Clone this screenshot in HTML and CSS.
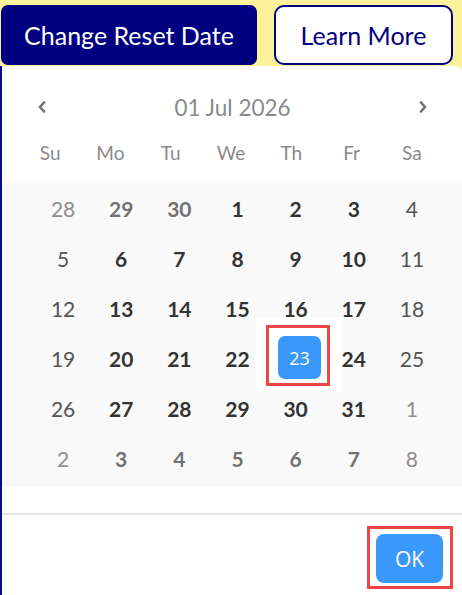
FILE: index.html
```html
<!DOCTYPE html>
<html lang="en">
<head>
    <meta charset="UTF-8">
    <meta name="viewport" content="width=device-width, initial-scale=1.0">
    <title>Reset Date</title>
    <link rel="stylesheet" href="styles.css">
</head>
<body>

<!-- Top actions -->
<div class="actions">
    <button class="btn btn-primary">Change Reset Date</button>
    <button class="btn btn-outline">Learn More</button>
</div>

<!-- Date picker panel -->
<div class="picker">
    <div class="picker-head">
        <button class="nav-btn prev" aria-label="Previous month">
            <svg width="8" height="12" viewBox="0 0 8 12"><polyline points="6,1.5 2,6 6,10.5" /></svg>
        </button>
        <span class="month-label">01 Jul 2026</span>
        <button class="nav-btn next" aria-label="Next month">
            <svg width="8" height="12" viewBox="0 0 8 12"><polyline points="2,1.5 6,6 2,10.5" /></svg>
        </button>
    </div>

    <div class="weekdays">
        <span>Su</span><span>Mo</span><span>Tu</span><span>We</span><span>Th</span><span>Fr</span><span>Sa</span>
    </div>

    <div class="days">
        <span class="day muted weekend">28</span>
        <span class="day muted">29</span>
        <span class="day muted">30</span>
        <span class="day">1</span>
        <span class="day">2</span>
        <span class="day">3</span>
        <span class="day weekend">4</span>

        <span class="day weekend">5</span>
        <span class="day">6</span>
        <span class="day">7</span>
        <span class="day">8</span>
        <span class="day">9</span>
        <span class="day">10</span>
        <span class="day weekend">11</span>

        <span class="day weekend">12</span>
        <span class="day">13</span>
        <span class="day">14</span>
        <span class="day">15</span>
        <span class="day">16</span>
        <span class="day">17</span>
        <span class="day weekend">18</span>

        <span class="day weekend">19</span>
        <span class="day">20</span>
        <span class="day">21</span>
        <span class="day">22</span>
        <span class="day selected"><span class="selected-mark">23</span></span>
        <span class="day">24</span>
        <span class="day weekend">25</span>

        <span class="day weekend">26</span>
        <span class="day">27</span>
        <span class="day">28</span>
        <span class="day">29</span>
        <span class="day">30</span>
        <span class="day">31</span>
        <span class="day muted weekend">1</span>

        <span class="day muted weekend">2</span>
        <span class="day muted">3</span>
        <span class="day muted">4</span>
        <span class="day muted">5</span>
        <span class="day muted">6</span>
        <span class="day muted">7</span>
        <span class="day muted weekend">8</span>
    </div>

    <div class="picker-foot">
        <button class="ok-btn">OK</button>
    </div>
</div>

</body>
</html>
```

FILE: styles.css
```css
body {
    margin: 0;
    font-family: Lato, "Open Sans", sans-serif;
    background-color: #fcf29c;
}

button {
    font-family: inherit;
    cursor: pointer;
}

/* Top buttons */
.actions {
    display: flex;
    gap: 17px;
    padding: 5px 0 1px 1px;
}

.btn {
    height: 60px;
    font-size: 25px;
    border-radius: 7px;
    padding: 0;
}

.btn-primary {
    width: 256px;
    background-color: #000080;
    color: white;
    border: none;
}

.btn-outline {
    width: 179px;
    background-color: white;
    color: #000080;
    border: 2px solid #000080;
    border-radius: 10px;
}

/* Picker panel */
.picker {
    background-color: white;
    border-left: 2px solid #0b0b8c;
    border-top-right-radius: 6px;
    min-height: calc(100vh - 66px);
    box-sizing: border-box;
}

.picker-head {
    display: grid;
    grid-template-columns: 1fr auto 1fr;
    align-items: center;
    height: 40px;
    padding: 21px 35px 0 36px;
}

.nav-btn {
    background: none;
    border: none;
    padding: 0;
    display: flex;
}

.nav-btn.next {
    justify-self: end;
}

.nav-btn polyline {
    fill: none;
    stroke: #6f6f6f;
    stroke-width: 2.6;
    stroke-linecap: round;
    stroke-linejoin: round;
}

.month-label {
    font-size: 22.5px;
    color: #8a8a8a;
}

.weekdays {
    display: grid;
    grid-template-columns: repeat(7, 1fr);
    height: 50px;
    padding: 0 20px 0 18px;
    align-items: center;
    text-align: center;
    font-size: 19px;
    color: #8a8a8a;
}

/* Day grid */
.days {
    position: relative;
    z-index: 0;
    display: grid;
    grid-template-columns: repeat(7, 1fr);
    grid-auto-rows: 50px;
    margin-top: 6px;
    padding: 0 21px 4px 32px;
    background-color: #f9f9f9;
}

.day {
    display: flex;
    align-items: center;
    justify-content: center;
    font-size: 21px;
    font-weight: bold;
    color: #333;
}

.day.weekend {
    font-weight: normal;
    color: #555;
}

.day.muted {
    color: #727272;
}

.day.muted.weekend {
    color: #8e8e8e;
}

.day.selected {
    position: relative;
}

.day.selected::before {
    content: "";
    position: absolute;
    top: -16px;
    bottom: -9px;
    left: -11px;
    right: -18px;
    background-color: white;
    z-index: -1;
}

.day.selected::after {
    content: "";
    position: absolute;
    top: -8px;
    bottom: -3px;
    left: -1px;
    right: -5px;
    border: 3px solid #f04545;
}

.selected-mark {
    width: 43px;
    height: 43px;
    margin-left: 8px;
    margin-top: -1px;
    border-radius: 7px;
    background-color: #3a98fb;
    color: white;
    font-family: "Open Sans", sans-serif;
    font-weight: normal;
    font-size: 18px;
    display: flex;
    align-items: center;
    justify-content: center;
}

/* Footer */
.picker-foot {
    display: flex;
    justify-content: flex-end;
    margin-top: 26px;
    border-top: 2px solid #e6e6e6;
    padding: 19px 19px 12px 0;
}

.ok-btn {
    position: relative;
    width: 67px;
    height: 49px;
    border: none;
    border-radius: 8px;
    background-color: #3a98fb;
    color: white;
    font-family: "Open Sans", sans-serif;
    font-size: 21px;
}

.ok-btn::after {
    content: "";
    position: absolute;
    top: -8px;
    bottom: -6px;
    left: -9px;
    right: -10px;
    border: 3px solid #f04545;
}
```
